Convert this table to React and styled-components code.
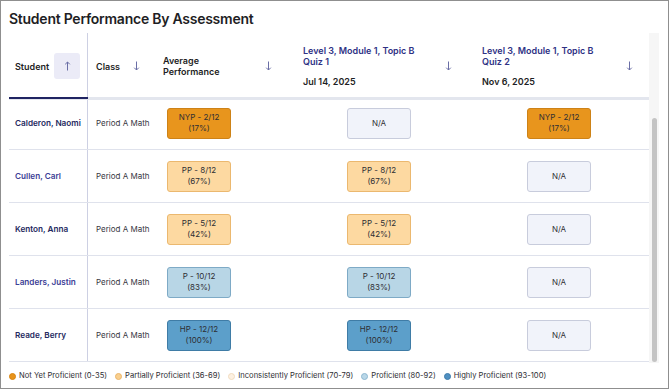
import React from 'react';
import styled, { createGlobalStyle } from 'styled-components';

const GlobalStyle = createGlobalStyle`
  body {
    margin: 0;
    background: #fff;
    font-family: Inter, "Open Sans", sans-serif;
  }
`;

const Frame = styled.div`
  width: 669px;
  height: 389px;
  box-sizing: border-box;
  border: 1px solid #8f8f8f;
  padding: 0 9px 0 8px;
  display: flex;
  flex-direction: column;
`;

const Title = styled.h1`
  margin: 9px 0 0 0;
  height: 23px;
  font-size: 14px;
  line-height: 18px;
  font-weight: 600;
  color: #1e1e24;
  letter-spacing: -0.25px;
`;

const TableArea = styled.div`
  display: flex;
  height: 330px;
`;

const Table = styled.div`
  flex: 1;
  display: flex;
  flex-direction: column;
`;

const GRID = '79px 67px 140px 179px 1fr';

const HeaderRow = styled.div`
  display: grid;
  grid-template-columns: ${GRID};
  height: 64px;
  position: relative;
  z-index: 1;
  background: #fff;
  box-shadow: 0 3px 0 #e3e6ee;
`;

const HeadCell = styled.div`
  display: flex;
  align-items: center;
  justify-content: space-between;
  padding: 2px ${p => p.$pr}px 0 ${p => p.$pl || 8}px;
  font-size: 9px;
  font-weight: 600;
  line-height: 11px;
  color: #1e1e24;
  ${p => p.$first && `
    border-right: 1px solid #cdd0e3;
    box-shadow: 0 2px 0 #1f2462;
    position: relative;
    z-index: 2;
  `}
`;

const SortBox = styled.div`
  width: 26px;
  height: 26px;
  border-radius: 3px;
  background: #ebebf7;
  display: flex;
  align-items: center;
  justify-content: center;
`;

const QuizHead = styled.div`
  display: flex;
  flex-direction: column;
  gap: 9px;
`;

const QuizTitle = styled.div`
  color: #2e3184;
  font-weight: 600;
`;

const QuizDate = styled.div`
  color: #1e1e24;
  font-weight: 600;
`;

const Row = styled.div`
  display: grid;
  grid-template-columns: ${GRID};
  height: 53px;
  box-sizing: border-box;
  border-bottom: 1px solid #dfe2ec;
`;

const Cell = styled.div`
  display: flex;
  align-items: center;
  padding-left: ${p => p.$pl || 8}px;
  font-size: 8px;
  color: #38383f;
  ${p => p.$first && `border-right: 1px solid #cdd0e3;`}
`;

const Name = styled.span`
  font-weight: 600;
  font-size: 8.2px;
  color: ${p => (p.$visited ? '#3c4096' : '#242960')};
`;

const SCORE = {
  nyp: { bg: '#e8951d', border: '#cd8217' },
  pp: { bg: '#fdd9a1', border: '#ebb86f' },
  p: { bg: '#b8d6e6', border: '#7eaac6' },
  hp: { bg: '#5c9fca', border: '#3f7ca6' },
  na: { bg: '#f1f3fa', border: '#c8ccdc' },
};

const ScoreBox = styled.div`
  width: 64px;
  height: 31px;
  box-sizing: border-box;
  border-radius: 3px;
  border: 1px solid ${p => SCORE[p.$level].border};
  background: ${p => SCORE[p.$level].bg};
  display: flex;
  flex-direction: column;
  align-items: center;
  justify-content: center;
  font-size: 8px;
  line-height: 11px;
  color: #2e2e33;
`;

const ScrollTrack = styled.div`
  width: 10px;
  background: #f6f6f6;
  display: flex;
  flex-direction: column;
  align-items: center;
`;

const ScrollThumb = styled.div`
  margin-top: 85px;
  width: 5px;
  height: 244px;
  border-radius: 3px;
  background: #c4c4c4;
`;

const Legend = styled.div`
  display: flex;
  align-items: center;
  gap: 8px;
  margin-top: 6px;
  font-size: 7.6px;
  line-height: 14px;
  color: #2e2e33;
`;

const LegendItem = styled.div`
  display: flex;
  align-items: center;
  gap: 3px;
`;

const Dot = styled.span`
  width: 7px;
  height: 7px;
  border-radius: 50%;
  box-sizing: border-box;
  background: ${p => p.$bg};
  border: 1px solid ${p => p.$border};
`;

const Arrow = ({ up }) => (
  <svg width="7" height="10" viewBox="0 0 7 10" fill="none" stroke="#6a6ea6" strokeWidth="1">
    {up ? (
      <>
        <path d="M3.5 9.5V1" />
        <path d="M1.2 3.3L3.5 1L5.8 3.3" />
      </>
    ) : (
      <>
        <path d="M3.5 0.5V9" />
        <path d="M1.2 6.7L3.5 9L5.8 6.7" />
      </>
    )}
  </svg>
);

const Score = ({ s }) => (
  <ScoreBox $level={s.level}>
    {s.level === 'na' ? (
      <span>N/A</span>
    ) : (
      <>
        <span>{s.label}</span>
        <span>{s.pct}</span>
      </>
    )}
  </ScoreBox>
);

const NA = { level: 'na' };

const students = [
  {
    name: 'Calderon, Naomi',
    avg: { level: 'nyp', label: 'NYP - 2/12', pct: '(17%)' },
    q1: NA,
    q2: { level: 'nyp', label: 'NYP - 2/12', pct: '(17%)' },
  },
  {
    name: 'Cullen, Carl',
    visited: true,
    avg: { level: 'pp', label: 'PP - 8/12', pct: '(67%)' },
    q1: { level: 'pp', label: 'PP - 8/12', pct: '(67%)' },
    q2: NA,
  },
  {
    name: 'Kenton, Anna',
    avg: { level: 'pp', label: 'PP - 5/12', pct: '(42%)' },
    q1: { level: 'pp', label: 'PP - 5/12', pct: '(42%)' },
    q2: NA,
  },
  {
    name: 'Landers, Justin',
    visited: true,
    avg: { level: 'p', label: 'P - 10/12', pct: '(83%)' },
    q1: { level: 'p', label: 'P - 10/12', pct: '(83%)' },
    q2: NA,
  },
  {
    name: 'Reade, Berry',
    avg: { level: 'hp', label: 'HP - 12/12', pct: '(100%)' },
    q1: { level: 'hp', label: 'HP - 12/12', pct: '(100%)' },
    q2: NA,
  },
];

const legend = [
  { label: 'Not Yet Proficient (0-35)', bg: '#e8931a', border: '#d88410' },
  { label: 'Partially Proficient (36-69)', bg: '#f9cf8e', border: '#eab56a' },
  { label: 'Inconsistently Proficient (70-79)', bg: '#fdf1e2', border: '#f1dcc0' },
  { label: 'Proficient (80-92)', bg: '#b9d7e8', border: '#8db7d0' },
  { label: 'Highly Proficient (93-100)', bg: '#4f90c1', border: '#3d7bab' },
];

export default function App() {
  return (
    <>
      <GlobalStyle />
      <Frame>
        <Title>Student Performance By Assessment</Title>
        <TableArea>
          <Table>
            <HeaderRow>
              <HeadCell $first $pl={6} $pr={7}>
                <span>Student</span>
                <SortBox>
                  <Arrow up />
                </SortBox>
              </HeadCell>
              <HeadCell $pr={15}>
                <span>Class</span>
                <Arrow />
              </HeadCell>
              <HeadCell $pr={23}>
                <span>
                  Average
                  <br />
                  Performance
                </span>
                <Arrow />
              </HeadCell>
              <HeadCell $pr={22}>
                <QuizHead>
                  <QuizTitle>
                    Level 3, Module 1, Topic B
                    <br />
                    Quiz 1
                  </QuizTitle>
                  <QuizDate>Jul 14, 2025</QuizDate>
                </QuizHead>
                <Arrow />
              </HeadCell>
              <HeadCell $pr={16}>
                <QuizHead>
                  <QuizTitle>
                    Level 3, Module 1, Topic B
                    <br />
                    Quiz 2
                  </QuizTitle>
                  <QuizDate>Nov 6, 2025</QuizDate>
                </QuizHead>
                <Arrow />
              </HeadCell>
            </HeaderRow>
            {students.map(s => (
              <Row key={s.name}>
                <Cell $first $pl={6}>
                  <Name $visited={s.visited}>{s.name}</Name>
                </Cell>
                <Cell>Period A Math</Cell>
                <Cell $pl={12}>
                  <Score s={s.avg} />
                </Cell>
                <Cell $pl={52}>
                  <Score s={s.q1} />
                </Cell>
                <Cell $pl={53}>
                  <Score s={s.q2} />
                </Cell>
              </Row>
            ))}
          </Table>
          <ScrollTrack>
            <ScrollThumb />
          </ScrollTrack>
        </TableArea>
        <Legend>
          {legend.map(l => (
            <LegendItem key={l.label}>
              <Dot $bg={l.bg} $border={l.border} />
              <span>{l.label}</span>
            </LegendItem>
          ))}
        </Legend>
      </Frame>
    </>
  );
}
